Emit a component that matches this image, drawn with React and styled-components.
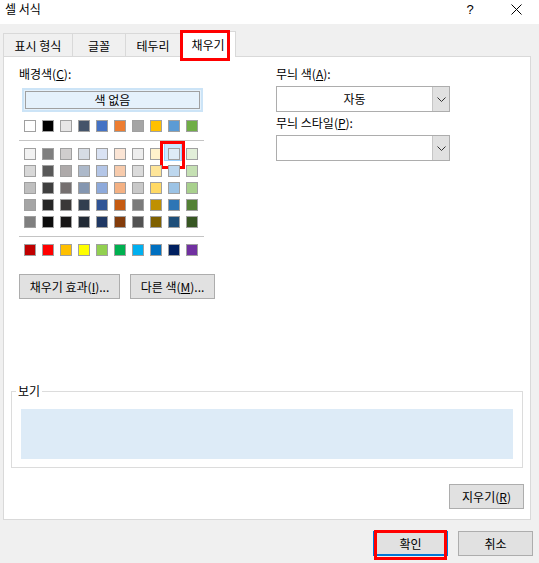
import React from 'react';
import styled, { createGlobalStyle } from 'styled-components';

const Global = createGlobalStyle`
  html, body { margin: 0; padding: 0; }
  body {
    background: #f0f0f0;
    font-family: "Noto Sans CJK KR", "Noto Sans", sans-serif;
    font-size: 12px;
    color: #000;
  }
  * { box-sizing: border-box; }
`;

const Window = styled.div`
  width: 539px;
  height: 563px;
  background: #f0f0f0;
  display: flex;
  flex-direction: column;
  overflow: hidden;
`;

const TitleBar = styled.div`
  height: 24px;
  background: #fff;
  display: flex;
  align-items: flex-start;
  padding: 1px 0 0 5px;
`;

const Title = styled.span`
  line-height: 16px;
`;

const TitleControls = styled.div`
  margin-left: auto;
  display: flex;
`;

const TitleButton = styled.div`
  width: 46px;
  height: 17px;
  display: flex;
  align-items: center;
  justify-content: center;
  font-family: "Liberation Sans", sans-serif;
  font-size: 13px;
`;

const TabRow = styled.div`
  height: 26px;
  margin-top: 6px;
  display: flex;
  align-items: flex-end;
  padding-left: 3px;
  position: relative;
  z-index: 1;
`;

const Tab = styled.div`
  position: relative;
  width: ${p => p.$w}px;
  height: ${p => (p.$active ? 26 : 23)}px;
  margin-left: ${p => (p.$first ? 0 : -1)}px;
  margin-bottom: ${p => (p.$active ? -1 : 0)}px;
  border: 1px solid #d9d9d9;
  border-bottom: none;
  background: ${p => (p.$active ? '#fff' : '#f0f0f0')};
  display: flex;
  align-items: center;
  justify-content: center;
  line-height: 16px;
  padding-top: ${p => (p.$active ? 0 : 1)}px;
`;

const RedMark = styled.div`
  position: absolute;
  border: 3px solid #ff0000;
  pointer-events: none;
  left: ${p => p.$l}px;
  top: ${p => p.$t}px;
  width: ${p => p.$w}px;
  height: ${p => p.$h}px;
  z-index: 3;
`;

const Pane = styled.div`
  margin-left: 3px;
  width: 528px;
  height: 464px;
  border: 1px solid #d9d9d9;
  background: #fff;
  padding: 9px 7px 10px 7px;
  display: flex;
  flex-direction: column;
`;

const TopSection = styled.div`
  display: grid;
  grid-template-columns: 257px 174px;
  padding-left: 8px;
`;

const Column = styled.div`
  display: flex;
  flex-direction: column;
  align-items: flex-start;
`;

const Label = styled.div`
  line-height: 16px;
  height: 16px;
  margin-top: ${p => p.$mt || 0}px;
  white-space: nowrap;
`;

const NoColorOuter = styled.div`
  margin-top: 6px;
  margin-left: 3px;
  width: 181px;
  height: 24px;
  border: 2px solid #cce4f7;
  background: #e5f1fb;
  padding: 1px;
`;

const NoColorInner = styled.div`
  height: 100%;
  border: 1px solid #a0a0a0;
  display: flex;
  align-items: center;
  justify-content: center;
  line-height: 16px;
`;

const SwatchGrid = styled.div`
  margin-top: ${p => p.$mt}px;
  margin-left: 5px;
  display: grid;
  grid-template-columns: repeat(10, 12px);
  column-gap: 6px;
  row-gap: 5px;
`;

const Swatch = styled.div`
  position: relative;
  width: 12px;
  height: 12px;
  border: 1px solid #a0a0a0;
  background: ${p => p.$c};
`;

const Highlight = styled.div`
  position: absolute;
  left: -4px;
  top: -6px;
  width: 18px;
  height: 19px;
  background: #cce8ff;
  border: 1px solid #99d1ff;
  z-index: -1;
`;

const SwatchCell = styled.div`
  position: relative;
  z-index: 0;
  width: 12px;
  height: 12px;
`;

const Separator = styled.div`
  margin-top: ${p => p.$mt}px;
  width: 185px;
  height: 1px;
  background: #c4c4c4;
`;

const ButtonRow = styled.div`
  margin-top: 18px;
  display: flex;
  gap: 10px;
`;

const Button = styled.button`
  position: relative;
  width: ${p => p.$w}px;
  height: 25px;
  padding: 0;
  background: #e1e1e1;
  border: 1px solid #adadad;
  font-family: inherit;
  font-size: 12px;
  line-height: 16px;
  color: #000;
  display: flex;
  align-items: center;
  justify-content: center;
  white-space: nowrap;
  ${p => p.$default && `
    border-color: #0078d7;
    box-shadow: inset 0 0 0 1px #0078d7;
  `}
`;

const Combo = styled.div`
  margin-top: 4px;
  width: 174px;
  height: 26px;
  border: 1px solid #adadad;
  background: #fff;
  display: flex;
`;

const ComboField = styled.div`
  flex: 1;
  display: flex;
  align-items: center;
  justify-content: center;
  line-height: 16px;
`;

const ComboButton = styled.div`
  width: 17px;
  background: #e1e1e1;
  border-left: 1px solid #c6c6c6;
  display: flex;
  align-items: center;
  justify-content: center;
`;

const GroupBox = styled.div`
  position: relative;
  margin-top: auto;
  height: 77px;
  border: 1px solid #dcdcdc;
  padding: 17px 9px 7px 9px;
`;

const GroupLabel = styled.span`
  position: absolute;
  left: 4px;
  top: -9px;
  padding: 0 2px;
  background: #fff;
  line-height: 16px;
`;

const Preview = styled.div`
  height: 50px;
  background: #ddebf7;
`;

const ClearRow = styled.div`
  margin-top: 16px;
  display: flex;
  justify-content: flex-end;
  margin-right: -1px;
`;

const Footer = styled.div`
  margin-top: 11px;
  display: flex;
  justify-content: flex-end;
  gap: 10px;
  padding-right: 6px;
`;

const Chevron = () => (
  <svg width="9" height="5" viewBox="0 0 9 5">
    <polyline points="0.5,0.5 4.5,4.5 8.5,0.5" fill="none" stroke="#333" strokeWidth="1" />
  </svg>
);

const themeRow = ['#FFFFFF', '#000000', '#E7E6E6', '#44546A', '#4472C4', '#ED7D31', '#A5A5A5', '#FFC000', '#5B9BD5', '#70AD47'];
const tints = [
  ['#F2F2F2', '#7F7F7F', '#D0CECE', '#D6DCE4', '#D9E2F3', '#FBE5D5', '#EDEDED', '#FFF2CC', '#DEEBF6', '#E2EFD9'],
  ['#D8D8D8', '#595959', '#AEAAAA', '#ADB9CA', '#B4C6E7', '#F7CBAC', '#DBDBDB', '#FEE599', '#BDD7EE', '#C5E0B3'],
  ['#BFBFBF', '#3F3F3F', '#757070', '#8496B0', '#8EAADB', '#F4B183', '#C9C9C9', '#FFD965', '#9CC3E5', '#A8D08D'],
  ['#A5A5A5', '#262626', '#3A3838', '#323F4F', '#2F5496', '#C55A11', '#7B7B7B', '#BF9000', '#2E75B5', '#538135'],
  ['#7F7F7F', '#0C0C0C', '#171616', '#222A35', '#1F3864', '#833C0B', '#525252', '#7F6000', '#1E4E79', '#375623'],
];
const standard = ['#C00000', '#FF0000', '#FFC000', '#FFFF00', '#92D050', '#00B050', '#00B0F0', '#0070C0', '#002060', '#7030A0'];

export default function App() {
  return (
    <Window>
      <Global />
      <TitleBar>
        <Title>셀 서식</Title>
        <TitleControls>
          <TitleButton>?</TitleButton>
          <TitleButton>
            <svg width="11" height="11" viewBox="0 0 11 11">
              <path d="M0.5 0.5 L10.5 10.5 M10.5 0.5 L0.5 10.5" stroke="#000" strokeWidth="1" />
            </svg>
          </TitleButton>
        </TitleControls>
      </TitleBar>

      <TabRow>
        <Tab $w={70} $first>표시 형식</Tab>
        <Tab $w={54}>글꼴</Tab>
        <Tab $w={56}>테두리</Tab>
        <Tab $w={56} $active>
          채우기
          <RedMark $l={-1} $t={-2} $w={50} $h={31} />
        </Tab>
      </TabRow>

      <Pane>
        <TopSection>
          <Column>
            <Label>배경색(<u>C</u>):</Label>
            <NoColorOuter>
              <NoColorInner>색 없음</NoColorInner>
            </NoColorOuter>
            <SwatchGrid $mt={8}>
              {themeRow.map((c, i) => <Swatch key={i} $c={c} />)}
            </SwatchGrid>
            <Separator $mt={8} />
            <SwatchGrid $mt={7}>
              {tints.flatMap((row, r) =>
                row.map((c, i) =>
                  r === 0 && i === 8 ? (
                    <SwatchCell key={`${r}-${i}`}>
                      <Highlight />
                      <Swatch $c={c} />
                      <RedMark $l={-8} $t={-7} $w={25} $h={28} />
                    </SwatchCell>
                  ) : (
                    <Swatch key={`${r}-${i}`} $c={c} />
                  )
                )
              )}
            </SwatchGrid>
            <Separator $mt={8} />
            <SwatchGrid $mt={7}>
              {standard.map((c, i) => <Swatch key={i} $c={c} />)}
            </SwatchGrid>
            <ButtonRow>
              <Button $w={101}>채우기 효과(<u>I</u>)...</Button>
              <Button $w={85}>다른 색(<u>M</u>)...</Button>
            </ButtonRow>
          </Column>

          <Column>
            <Label>무늬 색(<u>A</u>):</Label>
            <Combo>
              <ComboField>자동</ComboField>
              <ComboButton><Chevron /></ComboButton>
            </Combo>
            <Label $mt={3}>무늬 스타일(<u>P</u>):</Label>
            <Combo>
              <ComboField />
              <ComboButton><Chevron /></ComboButton>
            </Combo>
          </Column>
        </TopSection>

        <GroupBox>
          <GroupLabel>보기</GroupLabel>
          <Preview />
        </GroupBox>

        <ClearRow>
          <Button $w={75}>지우기(<u>R</u>)</Button>
        </ClearRow>
      </Pane>

      <Footer>
        <Button $w={75} $default>
          확인
          <RedMark $l={0} $t={-2} $w={73} $h={30} />
        </Button>
        <Button $w={75}>취소</Button>
      </Footer>
    </Window>
  );
}
